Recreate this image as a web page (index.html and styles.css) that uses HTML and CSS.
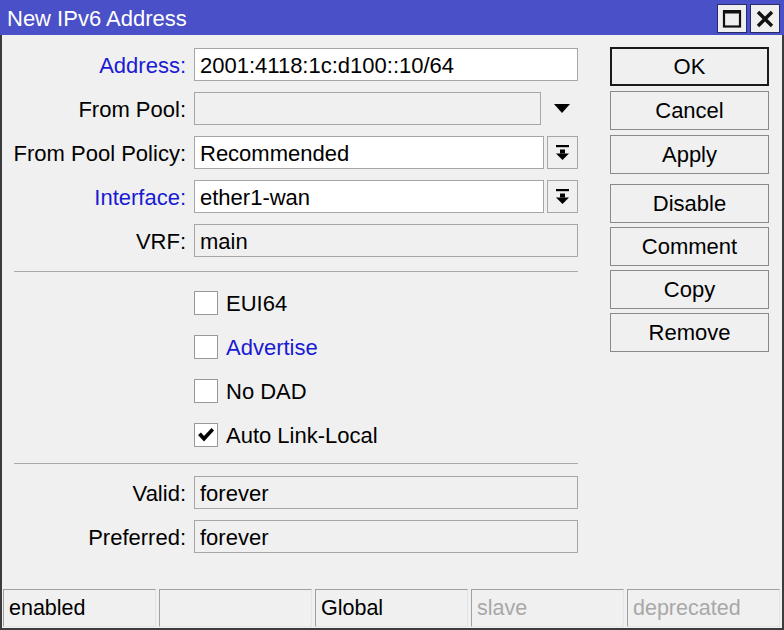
FILE: index.html
```html
<!DOCTYPE html>
<html>
<head>
<meta charset="utf-8">
<title>New IPv6 Address</title>
<link rel="stylesheet" href="styles.css">
</head>
<body>
<div class="window">
  <div class="titlebar">
    <span class="title">New IPv6 Address</span>
    <div class="tbuttons">
      <div class="tbtn"><svg width="20" height="20" viewBox="0 0 20 20"><rect x="2" y="2.5" width="16" height="15" fill="none" stroke="#111" stroke-width="2.2"/><rect x="1" y="1" width="18" height="3.5" fill="#111"/></svg></div>
      <div class="tbtn"><svg width="20" height="20" viewBox="0 0 20 20"><path d="M3 3 L17 17 M17 3 L3 17" stroke="#111" stroke-width="3.4"/></svg></div>
    </div>
  </div>
  <div class="main">
    <div class="form">
      <label class="lbl blue">Address:</label>
      <div class="field"><div class="input">2001:4118:1c:d100::10/64</div></div>

      <label class="lbl">From Pool:</label>
      <div class="field"><div class="input ro pool"></div><div class="tri"><svg width="16" height="10" viewBox="0 0 16 10"><path d="M0 0 H16 L8 9 Z" fill="#000"/></svg></div></div>

      <label class="lbl">From Pool Policy:</label>
      <div class="field"><div class="input grow">Recommended</div><div class="dd"><svg width="13" height="16" viewBox="0 0 13 16"><rect x="0" y="0" width="13" height="2.2" fill="#000"/><rect x="4" y="4.5" width="5" height="4" fill="#000"/><path d="M0 8.5 H13 L6.5 15 Z" fill="#000"/></svg></div></div>

      <label class="lbl blue">Interface:</label>
      <div class="field"><div class="input grow">ether1-wan</div><div class="dd"><svg width="13" height="16" viewBox="0 0 13 16"><rect x="0" y="0" width="13" height="2.2" fill="#000"/><rect x="4" y="4.5" width="5" height="4" fill="#000"/><path d="M0 8.5 H13 L6.5 15 Z" fill="#000"/></svg></div></div>

      <label class="lbl">VRF:</label>
      <div class="field"><div class="input ro">main</div></div>

      <div class="sep sep1"></div>

      <div class="spacer"></div>
      <div class="check"><span class="box"></span><span>EUI64</span></div>
      <div class="spacer"></div>
      <div class="check blue"><span class="box"></span><span>Advertise</span></div>
      <div class="spacer"></div>
      <div class="check"><span class="box"></span><span>No DAD</span></div>
      <div class="spacer"></div>
      <div class="check"><span class="box"><svg width="20" height="20" viewBox="0 0 20 20"><path d="M2 10 L5 7.5 L8 11 L15.5 3 L18 5.5 L8 16.5 Z" fill="#000"/></svg></span><span>Auto Link-Local</span></div>

      <div class="sep sep2"></div>

      <label class="lbl">Valid:</label>
      <div class="field"><div class="input ro">forever</div></div>
      <label class="lbl">Preferred:</label>
      <div class="field"><div class="input ro">forever</div></div>
    </div>
    <div class="buttons">
      <div class="group">
        <div class="btn default">OK</div>
        <div class="btn">Cancel</div>
        <div class="btn">Apply</div>
      </div>
      <div class="group g2">
        <div class="btn">Disable</div>
        <div class="btn">Comment</div>
        <div class="btn">Copy</div>
        <div class="btn">Remove</div>
      </div>
    </div>
  </div>
  <div class="status">
    <div class="cell">enabled</div>
    <div class="cell"></div>
    <div class="cell">Global</div>
    <div class="cell dim">slave</div>
    <div class="cell dim">deprecated</div>
  </div>
</div>
</body>
</html>
```
FILE: styles.css
```css
* { box-sizing: border-box; }
html, body { margin: 0; padding: 0; }
body {
  font-family: "Liberation Sans", Arial, sans-serif;
  font-size: 22px;
  color: #000;
  background: #f0f0f0;
}
.window {
  width: 784px;
  height: 630px;
  display: flex;
  flex-direction: column;
  background: #f0f0f0;
  border-left: 2px solid #3c3c3c;
  border-right: 2px solid #3c3c3c;
  border-bottom: 2px solid #3c3c3c;
}
.titlebar {
  flex: 0 0 35px;
  margin: 0 -2px;
  background: #4a50c8;
  display: flex;
  align-items: center;
  justify-content: space-between;
  padding: 2px 4px 0 7px;
}
.title {
  color: #fff;
  font-size: 22px;
}
.tbuttons { display: flex; gap: 3px; align-self: flex-start; margin-top: 2px; }
.tbtn {
  width: 30px;
  height: 29px;
  background: #efefef;
  border: 1px solid #2a2a6a;
  display: flex;
  align-items: center;
  justify-content: center;
}
.main {
  flex: 1 1 auto;
  min-height: 0;
  display: flex;
  padding: 12px 0 0 12px;
}
.form {
  display: grid;
  grid-template-columns: 172px 384px;
  column-gap: 8px;
  row-gap: 11px;
  align-content: start;
  margin-top: 1px;
}
.lbl, .field, .check, .spacer { height: 33px; }
.lbl {
  display: flex;
  align-items: center;
  justify-content: flex-end;
  white-space: nowrap;
  padding-top: 2px;
}
.blue { color: #1a1ad2; }
.field { display: flex; gap: 3px; align-items: stretch; }
.input {
  flex: 1;
  background: #fff;
  border: 1px solid #a6a6a6;
  padding: 2px 5px 0;
  display: flex;
  align-items: center;
  white-space: nowrap;
}
.input.ro { background: #f0f0f0; }
.input.pool { flex: 0 0 347px; }
.tri { flex: 1; display: flex; align-items: center; justify-content: center; padding-left: 2px; }
.dd {
  width: 31px;
  border: 1px solid #a6a6a6;
  background: #f0f0f0;
  display: flex;
  align-items: center;
  justify-content: center;
}
.sep {
  grid-column: 1 / 3;
  height: 1px;
  background: #a8a8a8;
}
.sep1 { margin: 3px 0; }
.sep2 { margin: 1px 0; }
.check {
  display: flex;
  align-items: center;
  gap: 8px;
}
.check span:last-child { padding-top: 2px; }
.box {
  width: 24px;
  height: 24px;
  background: #fff;
  border: 1px solid #999;
  display: flex;
  align-items: center;
  justify-content: center;
}
.buttons {
  margin-left: 32px;
  width: 159px;
  display: flex;
  flex-direction: column;
}
.group { display: flex; flex-direction: column; gap: 5px; }
.g2 { margin-top: 10px; gap: 4px; }
.btn {
  height: 39px;
  border: 1px solid #8a8a8a;
  background: #f0f0f0;
  display: flex;
  align-items: center;
  justify-content: center;
  padding-top: 1px;
}
.btn.default { border: 2px solid #1a1a1a; }
.status {
  flex: 0 0 38px;
  display: flex;
  gap: 3px;
  padding: 0 2px 0 1px;
  margin-bottom: 1px;
  font-size: 21.5px;
}
.cell {
  flex: 1;
  border-top: 1px solid #a0a0a0;
  border-left: 1px solid #a0a0a0;
  border-right: 1px solid #e4e4e4;
  border-bottom: 1px solid #e4e4e4;
  padding: 0 5px;
  display: flex;
  align-items: center;
  white-space: nowrap;
}
.cell.dim { color: #a8a8a8; }
```
